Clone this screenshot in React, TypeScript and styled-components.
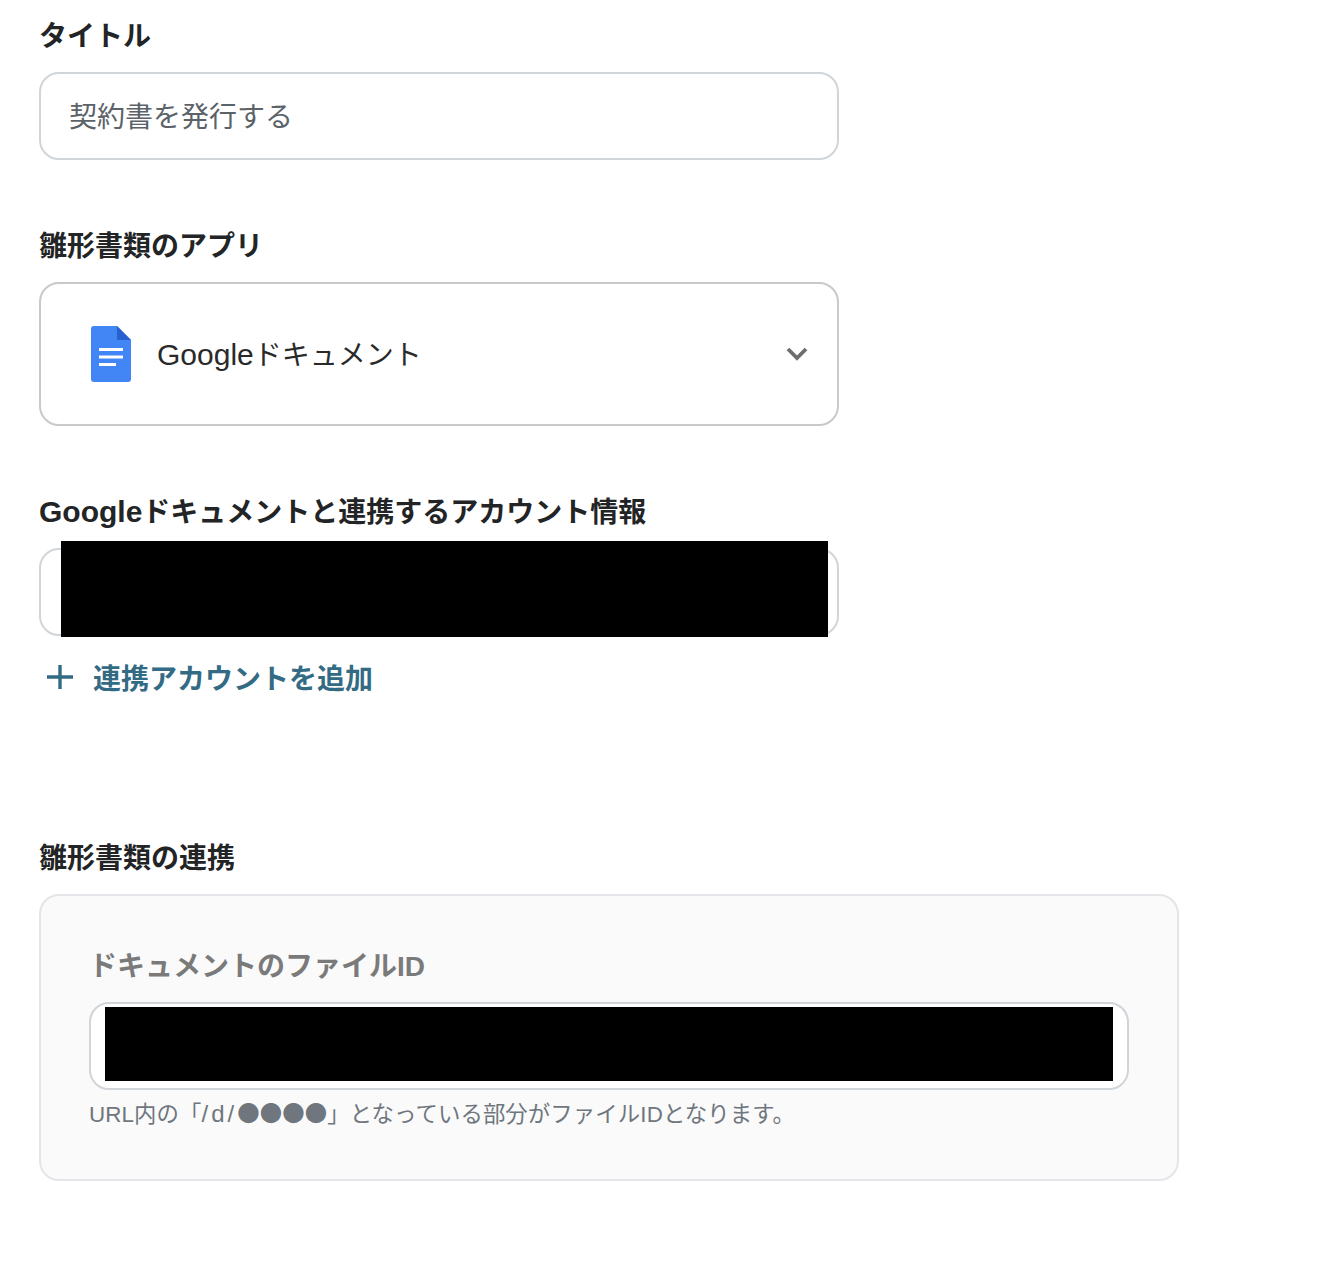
import React from "react";
import styled, { createGlobalStyle } from "styled-components";

const Global = createGlobalStyle`
  html, body { margin: 0; padding: 0; background: #fff; }
  body { font-family: "Liberation Sans", "Noto Sans CJK JP", sans-serif; }
  * { box-sizing: border-box; }
`;

const Page = styled.main`
  width: 1324px;
  height: 1272px;
  padding: 17px 0 0 39px;
  display: flex;
  flex-direction: column;
`;

const Section = styled.section<{ $gap?: number }>`
  margin-bottom: ${(p) => p.$gap ?? 67}px;
`;

const Label = styled.h2`
  margin: 0 0 15px;
  height: 40px;
  font-size: 28px;
  line-height: 40px;
  font-weight: 700;
  color: #222426;
`;

const Brand = styled.span`
  font-size: 30px;
  line-height: 0;
`;

const FieldWrap = styled.div<{ $width?: number }>`
  position: relative;
  width: ${(p) => p.$width ?? 800}px;
`;

const TextField = styled.div`
  height: 88px;
  padding: 0 28px 2px;
  display: flex;
  align-items: center;
  background: #fff;
  border: 2px solid #d0d5da;
  border-radius: 20px;
  font-size: 28px;
  color: #5b6268;
`;

const Select = styled.div`
  width: 800px;
  height: 144px;
  padding: 0 28px 0 50px;
  display: flex;
  align-items: center;
  border: 2px solid #c9c9c9;
  border-radius: 20px;
`;

const SelectText = styled.span`
  margin-left: 26px;
  padding-bottom: 2px;
  flex: 1;
  font-size: 28px;
  color: #2a2a2a;
`;

const Redaction = styled.div<{ $l: number; $t: number; $w: number; $h: number }>`
  position: absolute;
  left: ${(p) => p.$l}px;
  top: ${(p) => p.$t}px;
  width: ${(p) => p.$w}px;
  height: ${(p) => p.$h}px;
  background: #000;
`;

const AddLink = styled.a`
  height: 40px;
  margin-top: 22px;
  padding: 0 0 3px 8px;
  display: flex;
  align-items: center;
  gap: 20px;
  font-size: 28px;
  font-weight: 700;
  color: #336b85;
`;

const Panel = styled.div`
  width: 1140px;
  height: 287px;
  padding: 51px 48px 0;
  background: #fafafa;
  border: 2px solid #e3e5e8;
  border-radius: 20px;
`;

const SubLabel = styled.div`
  margin-bottom: 15px;
  font-size: 28px;
  line-height: 40px;
  font-weight: 700;
  color: #7a7a7a;
`;

const Hint = styled.p`
  margin: 9px 0 0;
  height: 32px;
  font-size: 22.4px;
  line-height: 32px;
  letter-spacing: 0.1px;
  color: #6f767d;
`;

const PathText = styled.span`
  font-size: 24px;
  line-height: 0;
  letter-spacing: 3px;
`;

const Dots = styled.span`
  font-family: "Noto Sans CJK JP", sans-serif;
  line-height: 0;
`;

const DocIcon = () => (
  <svg width="40" height="56" viewBox="0 0 40 56" style={{ flexShrink: 0 }}>
    <path d="M3 0H26L40 14V53a3 3 0 0 1-3 3H3a3 3 0 0 1-3-3V3a3 3 0 0 1 3-3Z" fill="#4285f4" />
    <path d="M26 0L40 14H26Z" fill="#2a5fd0" />
    <path d="M8 23.5H32M8 31H32M8 38.5H25" stroke="#fff" strokeWidth="3" fill="none" />
  </svg>
);

const Chevron = () => (
  <svg width="24" height="16" viewBox="0 0 24 16">
    <path d="M3 3L12 12L21 3" stroke="#6e6e6e" strokeWidth="3.8" fill="none" />
  </svg>
);

const Plus = () => (
  <svg width="26" height="26" viewBox="0 0 26 26">
    <path d="M13 1V25M0 13H26" stroke="#336b85" strokeWidth="3.4" fill="none" />
  </svg>
);

export default function App() {
  return (
    <>
      <Global />
      <Page>
        <Section>
          <Label>タイトル</Label>
          <FieldWrap>
            <TextField>契約書を発行する</TextField>
          </FieldWrap>
        </Section>
        <Section>
          <Label>雛形書類のアプリ</Label>
          <Select>
            <DocIcon />
            <SelectText>
              <Brand>Google</Brand>ドキュメント
            </SelectText>
            <Chevron />
          </Select>
        </Section>
        <Section $gap={141}>
          <Label>
            <Brand>Google</Brand>ドキュメントと連携するアカウント情報
          </Label>
          <FieldWrap>
            <TextField />
            <Redaction $l={22} $t={-7} $w={767} $h={96} />
          </FieldWrap>
          <AddLink>
            <Plus />
            連携アカウントを追加
          </AddLink>
        </Section>
        <Section $gap={0}>
          <Label>雛形書類の連携</Label>
          <Panel>
            <SubLabel>ドキュメントのファイルID</SubLabel>
            <FieldWrap $width={1040}>
              <TextField />
              <Redaction $l={16} $t={5} $w={1008} $h={74} />
            </FieldWrap>
            <Hint>
              URL内の「<PathText>/d/</PathText>
              <Dots>●●●●</Dots>」となっている部分がファイルIDとなります。
            </Hint>
          </Panel>
        </Section>
      </Page>
    </>
  );
}
